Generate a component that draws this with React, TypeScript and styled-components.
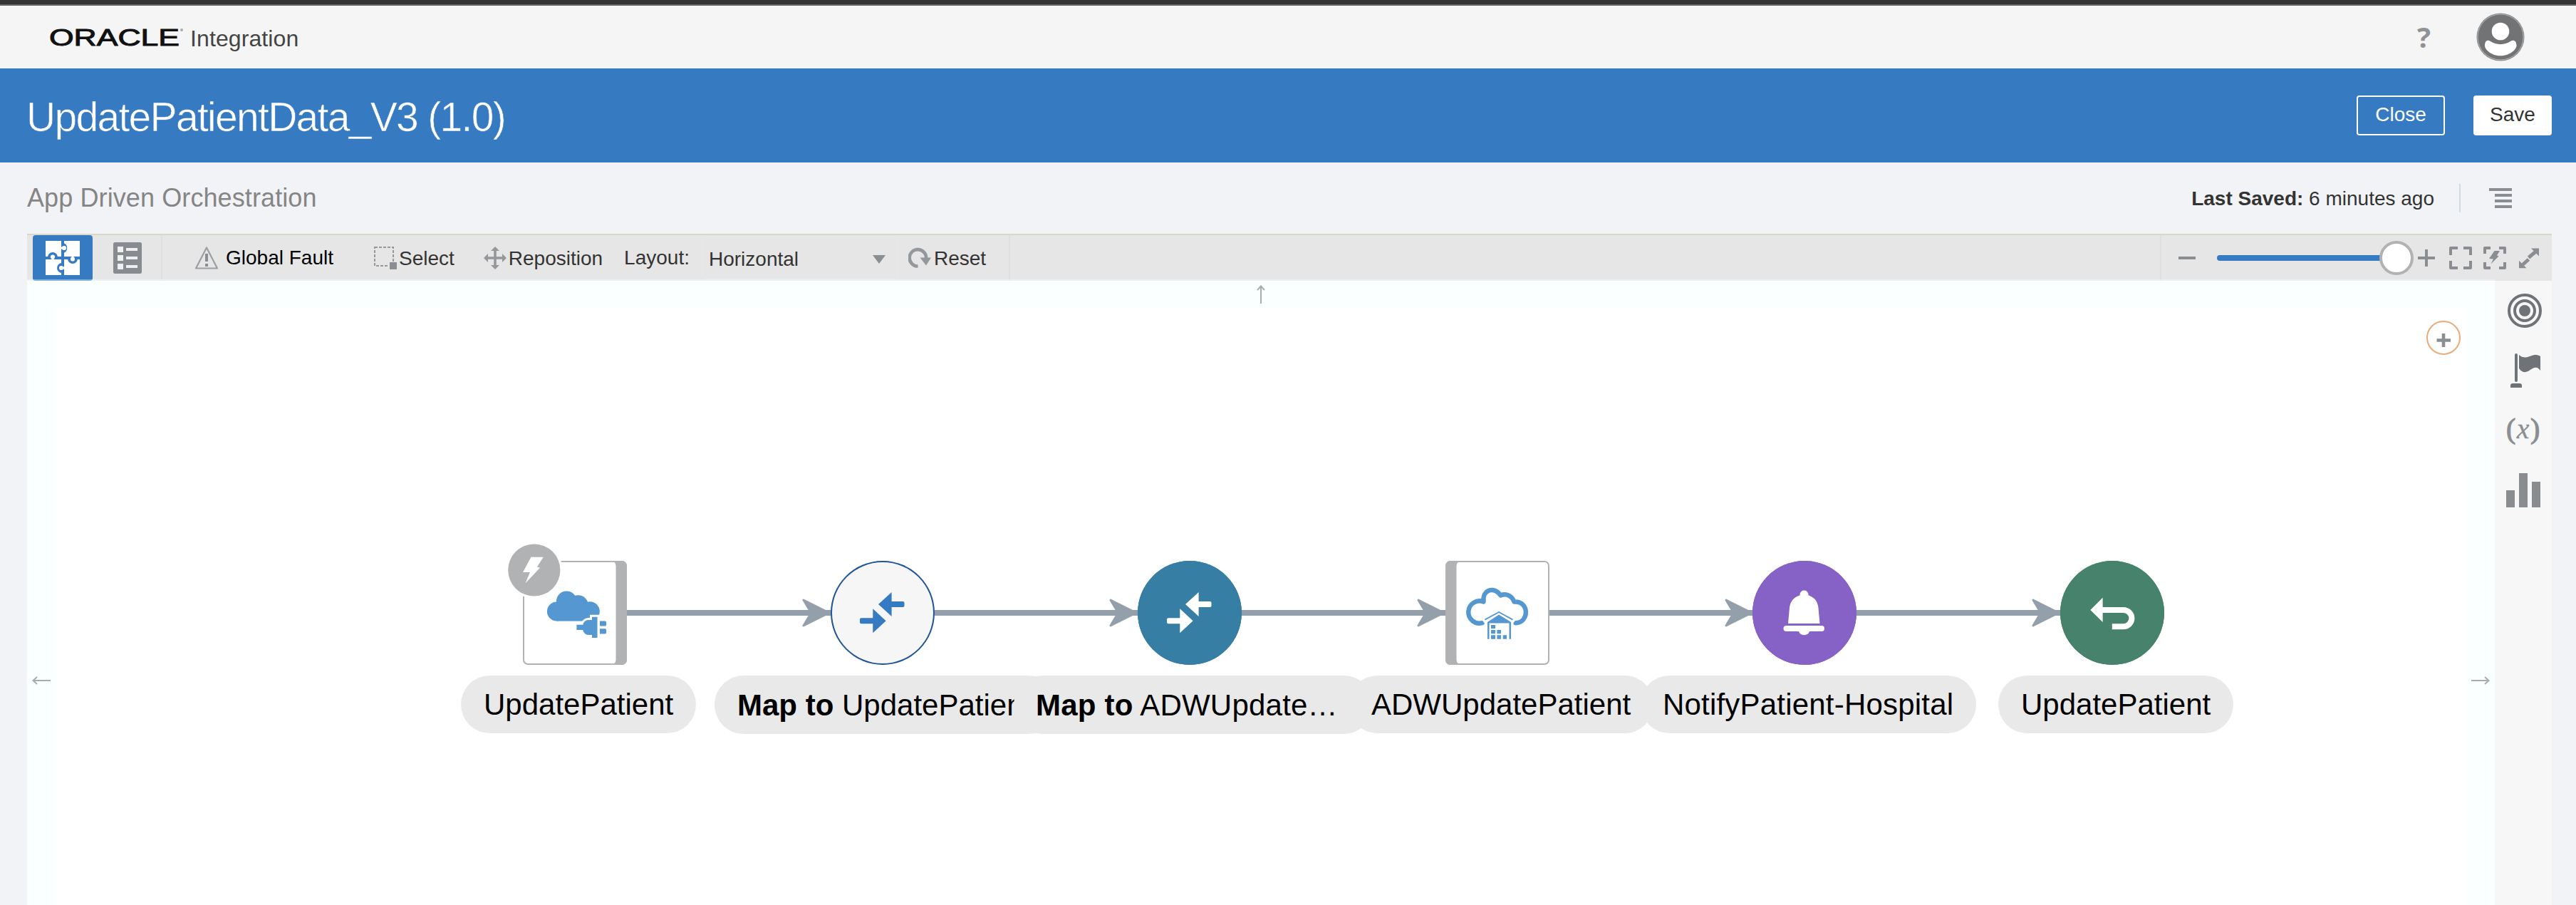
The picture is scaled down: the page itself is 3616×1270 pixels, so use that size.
import React from 'react';
import styled, { createGlobalStyle } from 'styled-components';

const BLUE = '#367ac1';
const ICON = '#8a8e93';

const GlobalStyle = createGlobalStyle`
  * { box-sizing: border-box; }
  body {
    margin: 0;
    background: #f2f3f6;
    font-family: "Liberation Sans", Arial, sans-serif;
    font-size: 28px;
    color: #333;
  }
  svg { display: block; flex: none; }
`;

const Page = styled.div`
  display: flex;
  flex-direction: column;
  width: 3616px;
  height: 1270px;
  overflow: hidden;
`;

const Header = styled.header`
  display: flex;
  align-items: center;
  height: 96px;
  flex: none;
  padding: 0 72px 0 64px;
  border-top: 6px solid #353435;
  box-shadow: inset 0 2px 0 #666566;
  background: #f5f5f5;
`;

const HeaderInner = styled.div`
  display: flex;
  align-items: center;
  flex: 1;
  padding-top: 2px;
`;

const ProductName = styled.span`
  margin-left: 7px;
  padding-top: 4px;
  font-size: 32px;
  letter-spacing: 0.1px;
  color: #444;
`;

const HelpMark = styled.span`
  margin-left: auto;
  margin-right: 64px;
  font-family: "Open Sans", "Liberation Sans", sans-serif;
  font-weight: 700;
  font-size: 40px;
  line-height: 48px;
  color: #8f9296;
`;

const TitleBar = styled.div`
  display: flex;
  align-items: center;
  gap: 40px;
  height: 132px;
  flex: none;
  padding: 0 34px 0 37px;
  background: ${BLUE};
`;

const Title = styled.h1`
  margin: 0 auto 0 0;
  padding-top: 3px;
  font-size: 57px;
  font-weight: 400;
  letter-spacing: -1.7px;
  color: #fff;
  -webkit-text-stroke: 0.6px ${BLUE};
`;

const Button = styled.button<{ $solid?: boolean }>`
  height: 56px;
  width: ${(p) => (p.$solid ? 110 : 124)}px;
  padding: 0 0 3px;
  border: 2px solid #fff;
  border-radius: 4px;
  background: ${(p) => (p.$solid ? '#fff' : 'transparent')};
  color: ${(p) => (p.$solid ? '#333' : '#fff')};
  font: inherit;
`;

const SubBar = styled.div`
  display: flex;
  align-items: center;
  height: 100px;
  flex: none;
  padding: 0 90px 0 38px;
`;

const Subtitle = styled.span`
  margin-right: auto;
  font-size: 36px;
  letter-spacing: 0.1px;
  color: #858585;
`;

const Saved = styled.span`
  padding-top: 2px;
`;

const SubDivider = styled.span`
  width: 2px;
  height: 40px;
  margin: 0 40px 0 35px;
  background: #d3dce2;
`;

const Toolbar = styled.div`
  position: relative;
  display: flex;
  align-items: center;
  height: 66px;
  flex: none;
  margin: 0 34px 0 38px;
  padding-left: 8px;
  border-top: 2px solid #d6d8c8;
  background: #e6e6e6;
  &::after {
    content: "";
    position: absolute;
    left: 0;
    right: 80px;
    bottom: 0;
    height: 2px;
    background: rgba(244, 255, 255, 0.4);
  }
`;

const ModeButton = styled.span`
  display: flex;
  align-items: center;
  justify-content: center;
  width: 84px;
  height: 64px;
  border-radius: 4px;
  background: ${BLUE};
`;

const Slot = styled.span<{ $ml: number }>`
  display: flex;
  align-items: center;
  margin-left: ${(p) => p.$ml}px;
`;

const Divider = styled.span<{ $ml?: number }>`
  width: 2px;
  align-self: stretch;
  margin-left: ${(p) => p.$ml ?? 0}px;
  background: #dfdfdf;
`;

const ToolLabel = styled.span<{ $drop?: number; $gap?: number; $color?: string }>`
  padding-top: ${(p) => (p.$drop ?? 0) * 2}px;
  margin-left: ${(p) => p.$gap ?? 0}px;
  color: ${(p) => p.$color ?? '#333'};
  white-space: nowrap;
`;

const LayoutSelect = styled.span`
  display: flex;
  align-items: center;
  justify-content: space-between;
  width: 275px;
  height: 60px;
  margin-left: 17px;
  padding: 0 16px 0 9px;
  border: 1px solid #e9e9e9;
  border-radius: 4px;
`;

const Zoom = styled.span`
  display: flex;
  align-items: center;
  align-self: stretch;
  margin-left: auto;
  padding-right: 16px;
`;

const Track = styled.span`
  width: 232px;
  height: 8px;
  border-radius: 4px 0 0 4px;
  background: ${BLUE};
`;

const Thumb = styled.span`
  width: 48px;
  height: 48px;
  margin-left: -4px;
  border: 4px solid #b1b2b4;
  border-radius: 50%;
  background: #fff;
`;

const Workspace = styled.div`
  display: flex;
  flex: 1;
  margin: 0 34px 0 38px;
`;

const Canvas = styled.main`
  position: relative;
  flex: 1;
  border: solid #faffff;
  border-width: 38px 40px 0;
  background: #fff;
`;

/* The surface spans the canvas together with its scroll bands. */
const Surface = styled.div`
  position: absolute;
  left: -40px;
  top: -38px;
  width: 3464px;
  height: 876px;
`;

const Rail = styled.aside`
  display: flex;
  flex-direction: column;
  gap: 36px;
  width: 80px;
  padding: 18px 0 0 16px;
  background: #f7f7f7;
`;

const Variable = styled.span`
  width: 50px;
  height: 48px;
  font-family: "Liberation Serif", serif;
  font-size: 40px;
  line-height: 43px;
  letter-spacing: 1.5px;
  color: ${ICON};
  -webkit-text-stroke: 1.1px ${ICON};
  white-space: nowrap;
`;

const VariableLetter = styled.i`
  -webkit-text-stroke: 0.3px ${ICON};
`;

const Placed = styled.div<{ $x: number; $y: number }>`
  position: absolute;
  left: ${(p) => p.$x}px;
  top: ${(p) => p.$y}px;
`;

const Circle = styled(Placed)<{ $bg: string; $line?: string }>`
  width: 146px;
  height: 146px;
  border-radius: 50%;
  background: ${(p) => p.$bg};
  box-shadow: inset 0 0 0 2px ${(p) => p.$line ?? p.$bg};
`;

const Card = styled(Placed)<{ $bar: 'left' | 'right' }>`
  width: 146px;
  height: 146px;
  border-radius: 7px;
  background: #fff;
  box-shadow: inset 0 0 0 2px #b1b2b4,
    inset ${(p) => (p.$bar === 'left' ? 15.5 : -15.5)}px 0 0 #b1b2b4;
`;

const Pill = styled(Placed)<{ $w: number; $tall?: boolean; $track?: number }>`
  width: ${(p) => p.$w}px;
  height: ${(p) => (p.$tall ? 82 : 81)}px;
  padding-left: ${(p) => (p.$track ? 31 : 32)}px;
  border-radius: 41px;
  background: #e9e9e9;
  color: #000;
  font-size: 42px;
  line-height: ${(p) => (p.$tall ? 83 : 81)}px;
  letter-spacing: ${(p) => p.$track ?? 0}px;
  white-space: nowrap;
`;

const AddNode = styled(Placed)`
  width: 48px;
  height: 48px;
  border: 2px solid #eaab7a;
  border-radius: 50%;
`;

const OracleLogo = () => (
  <svg width="196" height="44" viewBox="-6 -5 196 44">
    <text x="-1" y="28.500" fontSize="33.500" textLength="183" lengthAdjust="spacingAndGlyphs"
      fontFamily="Liberation Sans, Arial, sans-serif" fill="#111" stroke="#111" strokeWidth="1">ORACLE</text>
    <circle cx="185" cy="7" r="2" fill="#aaa" />
  </svg>
);

const Avatar = () => (
  <svg width="68" height="68">
    <circle cx="34" cy="34" r="33.5" fill="#85878a" />
    <circle cx="34" cy="34" r="32" fill="#717375" stroke="#b4b5b7" strokeWidth="1" />
    <circle cx="34" cy="26" r="12.3" fill="#fff" />
    <path d="M12 46C12 39 16 37 20 40C28 45.5 40 45.5 48 40C52 37 56.5 39 56.5 46C56.5 52 46 60.3 34 60.3S12 52 12 46Z" fill="#fff" />
  </svg>
);

const MenuIcon = () => (
  <svg width="32" height="30" fill={ICON}>
    <path d="M0 1H32V5H0ZM8 9H32V13H8ZM8 17H32V21H8ZM8 25H32V29H8Z" />
  </svg>
);

const PuzzleIcon = () => (
  <svg width="48" height="48">
    <path d="M0 0H22V22H0ZM26 0H48V22H26ZM0 26H22V48H0ZM26 26H48V48H26Z" fill="#fff" />
    <g fill={BLUE}>
      <path d="M25 3A7.3 7.3 0 0 1 25 17ZM3 23A7 7 0 0 1 17 23ZM31 25A7 7 0 0 0 45 25ZM23 31A7 7 0 0 0 23 45Z" />
    </g>
    <g fill="#fff">
      <circle cx="26" cy="10" r="3.1" />
      <circle cx="10" cy="22.5" r="3.1" />
      <circle cx="38" cy="25.5" r="3.1" />
      <circle cx="22" cy="38" r="3.1" />
      <path d="M22 8.5H26V11.5H22ZM8.5 22H11.5V26H8.5ZM36.5 22H39.5V26H36.5ZM22 36.5H26V39.5H22Z" />
    </g>
  </svg>
);

const ListIcon = () => (
  <svg width="40" height="44">
    <rect width="40" height="44" rx="2.5" fill="#888c90" />
    <path d="M6 6H14V14H6ZM6 18H14V26H6ZM6 30H14V38H6ZM18 8H34V12H18ZM18 20H34V24H18ZM18 32H34V36H18Z" fill="#f0f0f0" />
  </svg>
);

const WarningIcon = () => (
  <svg width="32" height="32" fill="none">
    <path d="M16 1.5L31 30.5H1Z" stroke="#9b9fa3" strokeWidth="2.2" strokeLinejoin="round" />
    <path d="M16 10V21M16 24V28" stroke={ICON} strokeWidth="4" />
  </svg>
);

const SelectIcon = () => (
  <svg width="32" height="32">
    <rect x="1" y="1" width="26" height="26" fill="none" stroke="#95989d" strokeWidth="2" strokeDasharray="4 2" />
    <rect x="21" y="21" width="11" height="11" fill="#e6e6e6" />
    <rect x="22" y="22" width="10" height="10" fill={ICON} />
  </svg>
);

const MoveIcon = () => (
  <svg width="32" height="32" fill="#94979b">
    <path d="M14.2 5H17.8V14.2H27V17.8H17.8V27H14.2V17.8H5V14.2H14.2Z" />
    <path d="M16 0L22 6H10ZM16 32L22 26H10ZM0 16L6 10V22ZM32 16L26 10V22Z" />
  </svg>
);

const ResetIcon = () => (
  <svg width="32" height="32">
    <path d="M13.500 27.500A11.700 11.700 0 1 1 25 17" fill="none" stroke="#94979b" strokeWidth="4.600" />
    <path d="M16.500 15.500H32L25 26.500Z" fill="#94979b" />
  </svg>
);

const FitIcon = ({ bolt }: { bolt?: boolean }) => (
  <svg width="32" height="32" fill="none" stroke={ICON} strokeWidth="4">
    <path
      strokeLinejoin="round"
      d={bolt
        ? 'M2 10V2H10M22 2H30V10M30 22V30H22M10 30H2V22'
        : 'M2 12V2H12M20 2H30V12M30 20V30H20M12 30H2V20'}
    />
    {bolt && <path d="M15.5 6H23L19 12.5L21.5 13.5L10.5 24.5L14 17.5L8 17Z" fill={ICON} stroke="none" />}
  </svg>
);

const ExpandIcon = () => (
  <svg width="32" height="32" fill={ICON}>
    <path d="M19 2.500H30V13.500ZM2 19.800V30.300H12.500Z" />
    <path d="M15.500 15.500L25 7.500M15.500 18L7 25.500" stroke={ICON} strokeWidth="5" />
  </svg>
);

const TargetIcon = () => (
  <svg width="50" height="48" fill="none" stroke="#6f7377" strokeWidth="4">
    <circle cx="26" cy="24" r="22" />
    <circle cx="26" cy="24" r="14" />
    <circle cx="26" cy="24" r="8" fill="#6f7377" stroke="none" />
  </svg>
);

const FlagIcon = () => (
  <svg width="50" height="48" fill="#6f7377">
    <rect x="12" y="0" width="4" height="40" rx="2" />
    <path d="M6 48V45Q6 42 9 42H19Q22 42 22 45V48Z" />
    <path d="M18 2Q22 6 28 5.500C34 4.500 40-1 48 4V24Q44 18 38 20.500C33 23 30 27 24 26Q20 24.500 18 21Z" />
  </svg>
);

const ChartIcon = () => (
  <svg width="50" height="48" fill="#898d90">
    <path d="M0 24H12V48H0ZM18 0H30V48H18ZM36 12H48V48H36Z" />
  </svg>
);

const Art = ({ children }: { children: React.ReactNode }) => (
  <svg width="146" height="146">{children}</svg>
);

const MapArt = ({ color }: { color: string }) => (
  <Art>
    <g fill={color}>
      <path d="M67 61L85.6 44V57H101.5Q103.5 57 103.5 59V63Q103.5 65 101.5 65H85.6V78Z" />
      <path d="M77.6 84.3L59.3 101.3V88.3H43Q41 88.3 41 86.3V82.3Q41 80.3 43 80.3H59.3V67.3Z" />
    </g>
  </Art>
);

const CloudPlugArt = () => (
  <Art>
    <g fill="#5597d1">
      <circle cx="47.5" cy="71" r="13.6" />
      <circle cx="61.3" cy="57" r="14.4" />
      <circle cx="77.5" cy="62.5" r="14.3" />
      <circle cx="94" cy="71" r="13.8" />
      <rect x="47.5" y="60" width="46.5" height="24.6" />
    </g>
    <g fill="#5597d1" stroke="#fff" strokeWidth="6" paintOrder="stroke">
      <path d="M75.4 89.7H84.3C85 86 88 83 92 83H97V78.7H104.5V108H97V104H92C88 104 85 101 84.3 97H75.4Z" />
    </g>
    <path d="M108 84.5H115.5Q117 84.5 117 86V90Q117 91.5 115.5 91.5H108ZM108 95.3H115.5Q117 95.3 117 97V101Q117 102.4 115.5 102.4H108Z" fill="#5597d1" />
  </Art>
);

const WarehouseArt = () => (
  <Art>
    <path d="M51.500 87.200A15.600 15.600 0 1 1 53.500 57.500C51.500 40 69 35.500 77.500 48.500C86 45 94 50 96.500 57.600C118 56 118 87 98.500 87.200"
      fill="none" stroke="#5597d1" strokeWidth="6.400" strokeLinecap="round" strokeLinejoin="round" />
    <path d="M53 85L75 71L97 85" fill="none" stroke="#fff" strokeWidth="5" />
    <path d="M55.400 82.600L75 72L94.500 82.600" fill="none" stroke="#5597d1" strokeWidth="1.800" />
    <g fill="#5597d1">
      <path d="M59 86L75 75.500L92 86V109.700H89.500V87.500H61.500V109.700H59Z" />
      <path d="M64 90H70V95H64ZM64 97H70V102.300H64ZM72.400 97H78V102.300H72.400ZM64 104.300H70V109.700H64ZM72.400 104.300H78V109.700H72.400ZM80.700 104.300H86V109.700H80.700Z" />
    </g>
  </Art>
);

const BellArt = () => (
  <Art>
    <g fill="#fff">
      <path d="M50 88L52 66C53 57 58 51 66.500 48.500V47C67.500 39.500 77.500 39.500 78.500 47V48.500C87 51 91.500 57 92.500 66L94.500 88Z" />
      <rect x="43.500" y="91" width="57.500" height="8" rx="4" />
      <path d="M65 98.500H80C79 106 66 106 65 98.500Z" />
    </g>
  </Art>
);

const ReturnArt = () => (
  <Art>
    <path d="M42.300 69L59.600 51.700V86Z" fill="#fff" />
    <path d="M59 69H88.500A11.900 11.600 0 0 1 88.500 92.200H72.800" fill="none" stroke="#fff" strokeWidth="8" />
  </Art>
);

const BoltBadge = () => (
  <svg width="80" height="80">
    <circle cx="39.800" cy="40" r="39.800" fill="#fff" />
    <circle cx="39.800" cy="40" r="36.600" fill="#b1b2b4" />
    <path d="M35.500 21.700H52.700L44 35.500L48 36.700L27.500 58.500L34 43H24Z" fill="#fff" />
  </svg>
);

const Connector = () => (
  <svg width="288" height="40" fill="#939fab">
    <rect x="0" y="16" width="287" height="8" />
    <path d="M248 0.500L285 19V21L248 39.500Q246 39.500 246.500 37.500L257 20L246.500 2.500Q246 0.500 248 0.500Z" />
  </svg>
);

const Arrow = ({ turn }: { turn: number }) => (
  <svg width="28" height="28" viewBox="0 0 28 28" transform={`rotate(${turn})`} fill="none" stroke="#ababab" strokeWidth="2">
    <path d="M3 14H27M8 9L2.500 14L8 19" />
  </svg>
);

const connectors = [842, 1273, 1705, 2137, 2568];

export default function App() {
  return (
    <Page>
      <GlobalStyle />
      <Header>
        <HeaderInner>
          <OracleLogo />
          <ProductName>Integration</ProductName>
          <HelpMark>?</HelpMark>
          <Avatar />
        </HeaderInner>
      </Header>

      <TitleBar>
        <Title>UpdatePatientData_V3 (1.0)</Title>
        <Button>Close</Button>
        <Button $solid>Save</Button>
      </TitleBar>

      <SubBar>
        <Subtitle>App Driven Orchestration</Subtitle>
        <Saved><b>Last Saved:</b> 6 minutes ago</Saved>
        <SubDivider />
        <MenuIcon />
      </SubBar>

      <Toolbar>
        <ModeButton><PuzzleIcon /></ModeButton>
        <Slot $ml={29}><ListIcon /></Slot>
        <Divider $ml={27} />
        <Slot $ml={46}>
          <WarningIcon />
          <ToolLabel $gap={11} $color="#000">Global Fault</ToolLabel>
        </Slot>
        <Slot $ml={57}>
          <SelectIcon />
          <ToolLabel $gap={3} $drop={1}>Select</ToolLabel>
        </Slot>
        <Slot $ml={41}>
          <MoveIcon />
          <ToolLabel $gap={3} $drop={1}>Reposition</ToolLabel>
        </Slot>
        <Slot $ml={30}><ToolLabel>Layout:</ToolLabel></Slot>
        <LayoutSelect>
          <ToolLabel $drop={2}>Horizontal</ToolLabel>
          <svg width="18" height="16"><path d="M0 4H18L9 16Z" fill={ICON} /></svg>
        </LayoutSelect>
        <Slot $ml={15}>
          <ResetIcon />
          <ToolLabel $gap={4} $drop={1}>Reset</ToolLabel>
        </Slot>
        <Divider $ml={32} />
        <Zoom>
          <Divider />
          <Slot $ml={24}><svg width="24" height="24"><path d="M0 12H24" stroke={ICON} strokeWidth="4" /></svg></Slot>
          <Slot $ml={30}><Track /><Thumb /></Slot>
          <Slot $ml={6}><svg width="24" height="24"><path d="M0 12H24M12 0V24" stroke={ICON} strokeWidth="4" /></svg></Slot>
          <Slot $ml={20}><FitIcon /></Slot>
          <Slot $ml={16}><FitIcon bolt /></Slot>
          <Slot $ml={16}><ExpandIcon /></Slot>
        </Zoom>
      </Toolbar>

      <Workspace>
        <Canvas>
          <Surface>
            <Placed $x={1718} $y={5}><Arrow turn={90} /></Placed>
            <Placed $x={6} $y={547}><Arrow turn={0} /></Placed>
            <Placed $x={3430} $y={547}><Arrow turn={180} /></Placed>
            <AddNode $x={3368} $y={56}>
              <svg width="44" height="44"><path d="M12.500 25.500H32M22 16V35" stroke={ICON} strokeWidth="4.600" /></svg>
            </AddNode>

            {connectors.map((x) => (
              <Placed key={x} $x={x} $y={446}><Connector /></Placed>
            ))}

            <Card $x={696} $y={393} $bar="right"><CloudPlugArt /></Card>
            <Placed $x={672} $y={366}><BoltBadge /></Placed>
            <Circle $x={1127.500} $y={393} $bg="#f6f6f6" $line="#1f5596"><MapArt color={BLUE} /></Circle>
            <Circle $x={1559} $y={393} $bg="#367ea3"><MapArt color="#fff" /></Circle>
            <Card $x={1990.500} $y={393} $bar="left"><WarehouseArt /></Card>
            <Circle $x={2422} $y={393} $bg="#8662c7"><BellArt /></Circle>
            <Circle $x={2854} $y={393} $bg="#47826c"><ReturnArt /></Circle>

            <Pill $x={609} $y={554} $w={330}>UpdatePatient</Pill>
            <Pill $x={965} $y={554} $w={481} $tall><b>Map to</b> UpdatePatient</Pill>
            <Pill $x={1385} $y={554} $w={504} $tall $track={0.22}><b>Map to</b> ADWUpdate…</Pill>
            <Pill $x={1855} $y={554} $w={428}>ADWUpdatePatient</Pill>
            <Pill $x={2265} $y={554} $w={471} $track={0.2}>NotifyPatient-Hospital</Pill>
            <Pill $x={2767} $y={554} $w={330}>UpdatePatient</Pill>
          </Surface>
        </Canvas>
        <Rail>
          <TargetIcon />
          <FlagIcon />
          <Variable>(<VariableLetter>x</VariableLetter>)</Variable>
          <ChartIcon />
        </Rail>
      </Workspace>
    </Page>
  );
}
